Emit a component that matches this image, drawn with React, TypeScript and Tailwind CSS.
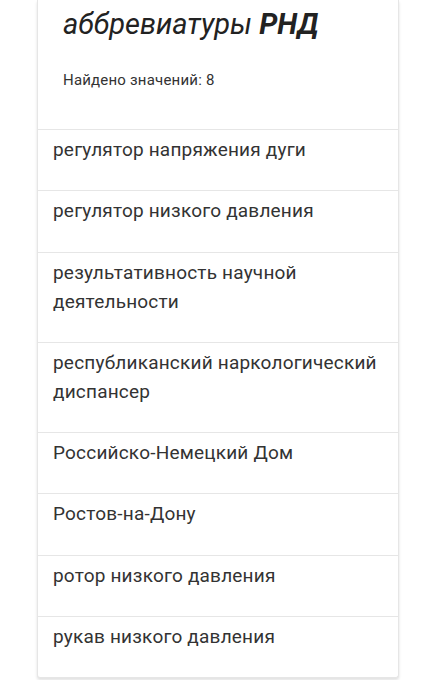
import React from "react";

const items: string[] = [
  "регулятор напряжения дуги",
  "регулятор низкого давления",
  "результативность научной деятельности",
  "республиканский наркологический диспансер",
  "Российско-Немецкий Дом",
  "Ростов-на-Дону",
  "ротор низкого давления",
  "рукав низкого давления",
];

const App: React.FC = () => {
  return (
    <div className="min-h-[680px] bg-white font-['Roboto',sans-serif] overflow-hidden">
      <div className="ml-[37px] w-[362px] border border-t-0 border-[#e6e6e6] rounded-b-[3px] shadow-[0_2px_3px_rgba(0,0,0,0.12)] bg-white">
        {/* Header */}
        <div className="pl-[25px] pt-[6px] pb-[39px]">
          <h1 className="text-[29px] leading-[36px] italic font-normal text-[#222]">
            аббревиатуры <span className="font-bold">РНД</span>
          </h1>
          <p className="mt-[28px] text-[15px] leading-[20px] tracking-[0.2px] text-[#333]">
            Найдено значений: 8
          </p>
        </div>

        {/* List */}
        <ul>
          {items.map((item) => (
            <li
              key={item}
              className="border-t border-[#e6e6e6] px-[15px] pt-[5px] pb-[26.25px] text-[19px] leading-[29px] tracking-[0.2px] text-[#333]"
            >
              {item}
            </li>
          ))}
        </ul>
      </div>
    </div>
  );
};

export default App;
